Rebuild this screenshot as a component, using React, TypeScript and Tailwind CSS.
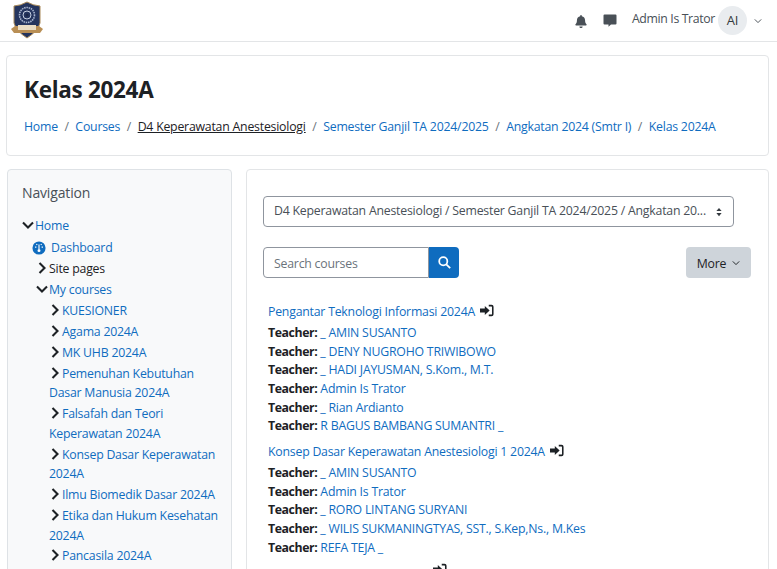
import React from "react";

const Chevron = ({ down = false }: { down?: boolean }) => (
  <svg viewBox="0 0 12 12" className="w-[12px] h-[12px] shrink-0 text-[#1d2125]" fill="none" stroke="currentColor" strokeWidth="2.1">
    {down ? <path d="M1 3.5 L6 8.5 L11 3.5" /> : <path d="M3.5 1 L8.5 6 L3.5 11" />}
  </svg>
);

const Tree = ({ pad, open, link = true, children }: { pad: string; open?: boolean; link?: boolean; children: React.ReactNode }) => (
  <div className={`${pad} leading-[19.5px] mb-[1.4px] ${link ? "text-[#0f6cbf]" : "text-[#1d2125]"}`}>
    <span className="inline-block align-[-1px] mr-[1px]"><Chevron down={open} /></span>
    {children}
  </div>
);

const EnrolIcon = () => (
  <svg viewBox="0 0 16 14" className="inline-block w-[14px] h-[13px] ml-[5px] align-[-1px] text-[#1d2125]" fill="currentColor">
    <path d="M0 4.800h5.500V1.800L11 7l-5.500 5.200V9.200H0z" />
    <path d="M10 0.500h3.200A2.300 2.300 0 0 1 15.500 2.800v8.400a2.300 2.300 0 0 1-2.300 2.300H10v-1.900h3a.7.7 0 0 0 .7-.7V3.100a.7.7 0 0 0-.7-.7h-3z" />
  </svg>
);

const Teacher = ({ name }: { name: string }) => (
  <div className="leading-[18.67px]">
    <span className="font-bold text-[#1d2125] tracking-[-0.4px]">Teacher:</span> <span className="text-[#0f6cbf]">{name}</span>
  </div>
);

const Course = ({ title, teachers }: { title: string; teachers: string[] }) => (
  <div className="mb-[6px]">
    <div className="text-[#0f6cbf] leading-[20px] h-[22px]">{title}<EnrolIcon /></div>
    {teachers.map((t, i) => <Teacher key={i} name={t} />)}
  </div>
);

export default function App() {
  return (
    <div className="h-[569px] w-[777px] overflow-hidden bg-white text-[12.3px] tracking-[-0.22px] text-[#1d2125] font-['Open_Sans','Noto_Sans',sans-serif]">
      <header className="h-[42px] border-b border-[#e3e5e7] flex items-center pl-[10px] pr-[15px]">
        <svg viewBox="0 0 34 38" className="w-[34px] h-[38px] -mt-[2px]">
          <path d="M4 5 Q11 4.500 17 1 Q23 4.500 30 5 V22 Q28 30 17 37 Q6 30 4 22 Z" fill="#25355e" stroke="#a98a5a" strokeWidth="1" />
          <circle cx="17" cy="14" r="7.500" fill="none" stroke="#a9b6d0" strokeWidth="1.600" strokeDasharray="1.500 0.800" />
          <circle cx="17" cy="14" r="4" fill="none" stroke="#c5cfe0" strokeWidth="1" />
          <circle cx="17" cy="14" r="1.500" fill="#1b2747" />
          <path d="M1 28 L5 25 H29 L33 28 L30 32 H4 Z" fill="#b98f55" />
          <rect x="8" y="24" width="18" height="5" fill="#e9dcc4" />
        </svg>
        <div className="ml-auto flex items-center">
          <svg viewBox="0 0 448 512" className="w-[12px] h-[13px] text-[#495057] mr-[16px] mt-[1px]" fill="currentColor">
            <path d="M224 512c35 0 64-29 64-64H160c0 35 29 64 64 64zm215-150c-19-21-55-52-55-154 0-78-54-140-128-155V32a32 32 0 1 0-64 0v21C118 68 64 130 64 208c0 102-36 133-55 154-6 6-9 14-9 22 0 16 13 32 32 32h384c19 0 32-16 32-32 0-8-3-16-9-22z" />
          </svg>
          <svg viewBox="0 0 14 13" className="w-[14px] h-[13px] text-[#495057] mr-[15px]" fill="currentColor">
            <path d="M1.500 0.500h11a1 1 0 0 1 1 1v8a1 1 0 0 1-1 1H8l-2.500 2.300V10.500h-4a1 1 0 0 1-1-1v-8a1 1 0 0 1 1-1z" />
          </svg>
          <span className="text-[#495057] mr-[3px] -mt-[3px] tracking-[-0.36px]">Admin Is Trator</span>
          <span className="w-[29px] h-[29px] rounded-full bg-[#e9ecef] flex items-center justify-center text-[#343a40] text-[13px]">AI</span>
          <svg viewBox="0 0 10 10" className="w-[8px] h-[8px] ml-[7px] text-[#495057]" fill="none" stroke="currentColor" strokeWidth="1.200"><path d="M1 3 L5 7 L9 3" /></svg>
        </div>
      </header>

      <div className="pt-[13px] pl-[6px] pr-[8px]">
        <section className="h-[101px] border border-[#e3e5e7] rounded-[4px] px-[17px] pt-[19px] bg-white">
          <h1 className="text-[22.5px] tracking-[-0.3px] font-bold leading-[30px] text-[#1d2125]">Kelas 2024A</h1>
          <nav className="mt-[12px] flex items-center text-[#0f6cbf] leading-[20px] whitespace-nowrap">
            {["Home", "Courses", "D4 Keperawatan Anestesiologi", "Semester Ganjil TA 2024/2025", "Angkatan 2024 (Smtr I)", "Kelas 2024A"].map((t, i) => (
              <React.Fragment key={t}>
                {i > 0 && <span className="text-[#6a737b] mx-[6.600px]">/</span>}
                <span className={i === 2 ? "text-[#1d2125] underline" : ""}>{t}</span>
              </React.Fragment>
            ))}
          </nav>
        </section>

        <div className="flex mt-[13px] gap-[14px] pl-[1px]">
          <aside className="w-[225px] shrink-0 h-[450px] bg-[#f8f9fa] border border-[#dee2e6] rounded-[4px] pl-[14px] pr-[10px] pt-[13px]">
            <h2 className="text-[14px] tracking-[-0.15px] leading-[20px] text-[#495057] font-normal mb-[13px]">Navigation</h2>
            <Tree pad="" open>Home</Tree>
            <div className="pl-[10px] text-[#0f6cbf] leading-[20px] mb-[1px] mt-[2px] flex items-center">
              <svg viewBox="0 0 16 16" className="w-[14px] h-[14px] mr-[5px]"><circle cx="8" cy="8" r="7.500" fill="#0f6cbf" /><path d="M8 4v6M3.500 7h1.500M11 7h1.500M5 3.500l1 1M11 3.500l-1 1" stroke="#fff" strokeWidth="1.300" /><circle cx="8" cy="11" r="1.700" fill="#fff" /></svg>
              Dashboard
            </div>
            <Tree pad="pl-[14px]" link={false}>Site pages</Tree>
            <Tree pad="pl-[14px] pt-[1px]" open>My courses</Tree>
            <div className="pl-[27px]">
              {["KUESIONER", "Agama 2024A", "MK UHB 2024A", "Pemenuhan Kebutuhan Dasar Manusia 2024A", "Falsafah dan Teori Keperawatan 2024A", "Konsep Dasar Keperawatan 2024A", "Ilmu Biomedik Dasar 2024A", "Etika dan Hukum Kesehatan 2024A", "Pancasila 2024A"].map((t) => (
                <Tree key={t} pad="">{t}</Tree>
              ))}
            </div>
          </aside>

          <main className="w-[523px] shrink-0 h-[450px] border border-[#e3e5e7] rounded-[4px] pl-[16px] pt-[26px]">
            <div className="w-[471px] h-[31px] border border-[#8f959e] rounded-[4px] pl-[10px] pr-[11px] flex items-center text-[#495057] whitespace-nowrap">
              <span className="flex-1">D4 Keperawatan Anestesiologi / Semester Ganjil TA 2024/2025 / Angkatan 20...</span>
              <svg viewBox="0 0 8 12" className="w-[6px] h-[10px] text-[#343a40]" fill="currentColor"><path d="M4 0.500 L7.500 4.700 H0.500 Z M4 11.500 L7.500 7.300 H0.500 Z" /></svg>
            </div>
            <div className="mt-[20px] w-[488px] flex justify-between">
              <div className="flex h-[31px]">
                <div className="w-[166px] border border-[#8f959e] rounded-l-[4px] pl-[10px] pt-[3px] flex items-center text-[#6a737b]">Search courses</div>
                <div className="w-[30px] bg-[#0f6cbf] rounded-r-[4px] flex items-center justify-center">
                  <svg viewBox="0 0 16 16" className="w-[13px] h-[13px]" fill="none" stroke="#fff" strokeWidth="2.200"><circle cx="6.500" cy="6.500" r="5" /><path d="M10.200 10.200 L15 15" /></svg>
                </div>
              </div>
              <div className="w-[65px] h-[31px] bg-[#ced4da] rounded-[4px] flex items-center justify-center text-[#1d2125]">
                <span className="pt-[3px]">More</span>
                <svg viewBox="0 0 10 10" className="w-[8px] h-[8px] ml-[6px]" fill="none" stroke="currentColor" strokeWidth="1.200"><path d="M1 3 L5 7 L9 3" /></svg>
              </div>
            </div>
            <div className="mt-[24px] pl-[5px]">
              <Course title="Pengantar Teknologi Informasi 2024A" teachers={["_ AMIN SUSANTO", "_ DENY NUGROHO TRIWIBOWO", "_ HADI JAYUSMAN, S.Kom., M.T.", "Admin Is Trator", "_ Rian Ardianto", "R BAGUS BAMBANG SUMANTRI _"]} />
              <Course title="Konsep Dasar Keperawatan Anestesiologi 1 2024A" teachers={["_ AMIN SUSANTO", "Admin Is Trator", "_ RORO LINTANG SURYANI", "_ WILIS SUKMANINGTYAS, SST., S.Kep,Ns., M.Kes", "REFA TEJA _"]} />
              <div className="pl-[160px] -mt-[2px] leading-[20px] h-[21px]"><EnrolIcon /></div>
            </div>
          </main>
        </div>
      </div>
    </div>
  );
}
